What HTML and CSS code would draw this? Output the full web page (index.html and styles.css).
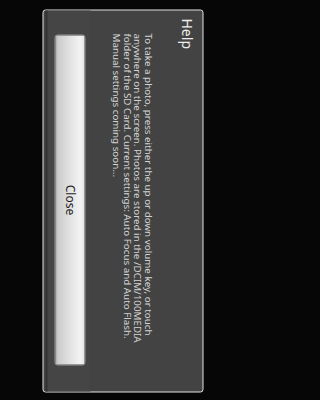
FILE: index.html
```html
<!DOCTYPE html>
<html>
<head>
<meta charset="utf-8">
<link rel="stylesheet" href="styles.css">
</head>
<body>
<div class="screen">
  <div class="dialog">
    <div class="title">Help</div>
    <div class="message">To take a photo, press either the up or down volume key, or touch<br>anywhere on the screen. Photos are stored in the /DCIM/100MEDIA<br>folder of the SD Card. Current settings: Auto Focus and Auto Flash.<br>Manual settings coming soon...</div>
    <div class="buttons"><button class="btn">Close</button></div>
  </div>
</div>
</body>
</html>
```

FILE: styles.css
```css
html, body {
  margin: 0;
  padding: 0;
  width: 240px;
  height: 400px;
  overflow: hidden;
  background: #060606;
}
.screen {
  width: 240px;
  height: 400px;
  overflow: hidden;
  display: flex;
  align-items: center;
  justify-content: center;
  background: #060606;
  font-family: "Noto Sans", "Open Sans", sans-serif;
}
.dialog {
  flex: none;
  box-sizing: border-box;
  width: 383px;
  height: 161px;
  border: 1px solid #e4e4e4;
  border-radius: 3px;
  background: #434343;
  display: flex;
  flex-direction: column;
  transform: translate(2.5px, 0.5px) rotate(90deg);
}
.title {
  padding: 9px 0 0 8px;
  font-size: 14px;
  line-height: 14px;
  color: #ececec;
}
.message {
  margin-top: 27px;
  padding-left: 23px;
  font-size: 9.8px;
  line-height: 10.5px;
  color: #d4d4d4;
  white-space: nowrap;
}
.buttons {
  margin-top: auto;
  margin-bottom: 2px;
  padding: 5px 0 7px 24px;
  background: #454545;
  border-bottom: 2px solid #333;
}
.btn {
  display: block;
  box-sizing: border-box;
  width: 331px;
  height: 31px;
  margin: 0;
  padding: 0;
  border: 1px solid #9a9a9a;
  border-radius: 3px;
  background: linear-gradient(to bottom, #e4e4e4 0%, #f4f4f4 12%, #e2e2e2 50%, #cbcbcb 92%, #a4a4a4 100%);
  font-family: "Noto Sans", "Open Sans", sans-serif;
  font-size: 12px;
  color: #1e1e1e;
}
```
